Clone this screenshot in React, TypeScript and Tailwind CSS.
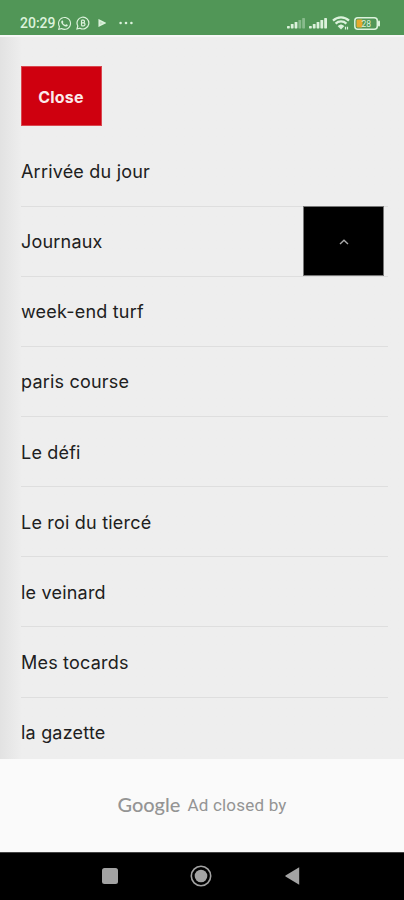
import { FaWhatsapp } from 'react-icons/fa'

type MenuItem = {
  label: string
  expandable?: boolean
}

const items: MenuItem[] = [
  { label: 'Arrivée du jour' },
  { label: 'Journaux', expandable: true },
  { label: 'week-end turf' },
  { label: 'paris course' },
  { label: 'Le défi' },
  { label: 'Le roi du tiercé' },
  { label: 'le veinard' },
  { label: 'Mes tocards' },
  { label: 'la gazette' },
]

const BusinessIcon = () => (
  <svg viewBox="0 0 14 14" className="ml-[4px] size-[14px]" fill="none" stroke="currentColor">
    <path d="M1 13l.8-3A5.9 5.9 0 1 1 4 12.2L1 13Z" strokeWidth="1.2" />
    <path d="M5.5 4.2v5.6M5.5 4.2h1.7a1.3 1.3 0 0 1 0 2.6H5.5M5.5 6.8h2a1.5 1.5 0 0 1 0 3h-2" strokeWidth="1.2" />
  </svg>
)

const Signal = ({ faded }: { faded: number }) => (
  <svg viewBox="0 0 19 12" className="h-3 w-[19px]" fill="currentColor">
    {[0, 1, 2, 3, 4].map((bar) => (
      <rect
        key={bar}
        x={bar * 3.8}
        y={9 - bar * 2}
        width="2.8"
        height={2.4 + bar * 2}
        rx="0.6"
        opacity={bar >= faded ? 0.4 : 1}
      />
    ))}
  </svg>
)

const StatusBar = () => (
  <header className="flex h-[35px] shrink-0 items-start justify-between bg-[#519657] pr-[23px] pl-[20px] text-[#dcf2dc]">
    <div className="flex h-[46px] items-center">
      <span className="w-[37px] font-[Roboto,sans-serif] text-[14px] font-medium">20:29</span>
      <FaWhatsapp className="size-[15px]" />
      <BusinessIcon />
      <svg viewBox="0 0 8 8" className="ml-[8px] size-2" fill="none" stroke="currentColor" strokeWidth="1.5">
        <path d="M1.2 1.2 6.8 4 1.2 6.8Z" fill="currentColor" fillOpacity="0.8" />
      </svg>
      <svg viewBox="0 0 14 4" className="ml-[13px] h-1 w-[14px]" fill="currentColor">
        <circle cx="1.6" cy="2" r="1.3" />
        <circle cx="7" cy="2" r="1.3" />
        <circle cx="12.4" cy="2" r="1.3" />
      </svg>
    </div>
    <div className="flex h-[46px] items-center">
      <Signal faded={3} />
      <span className="w-[3.5px]" />
      <Signal faded={5} />
      <svg viewBox="0 0 18 14" className="ml-[4px] h-[14px] w-[18px]" fill="none" stroke="currentColor">
        <path d="M1 4.6a11.6 11.6 0 0 1 16 0M3.6 7.6a7.8 7.8 0 0 1 10.8 0" strokeWidth="2.2" />
        <path d="M6 10.2a4.3 4.3 0 0 1 6 0L9 13.2Z" fill="currentColor" strokeWidth="0.6" />
        <path d="M13.5 10.8v2.7M15.5 10.8v2.7" strokeWidth="1.2" />
      </svg>
      <svg viewBox="0 0 27 13" className="ml-[4px] h-[13px] w-[27px]" fill="none">
        <rect x="0.8" y="0.8" width="22.5" height="11.4" rx="3" stroke="currentColor" strokeWidth="1.5" />
        <rect x="2.5" y="2.5" width="6" height="8" rx="1" fill="#e7aa2d" />
        <path d="M25 4.5v4" stroke="currentColor" strokeWidth="2" strokeLinecap="round" />
        <text x="7.6" y="9.6" fill="currentColor" fontSize="8.5" fontFamily="Roboto, sans-serif">
          28
        </text>
      </svg>
    </div>
  </header>
)

const MenuRow = ({ label, expandable }: MenuItem) => (
  <li className="flex h-[70.15px] shrink-0 items-stretch justify-between border-b border-[#dedede]">
    <span className="self-center pt-px text-[18px] tracking-[0.2px] text-[#202020]">{label}</span>
    {expandable && (
      <button className="-mt-px mr-[4px] flex w-[81px] items-center justify-center border border-[#777] bg-black text-[#aaa]">
        <svg viewBox="0 0 10 6" className="mt-[2px] h-[6px] w-[10px]" fill="none" stroke="currentColor" strokeWidth="1.4">
          <path d="M1 5 5 1.2 9 5" />
        </svg>
      </button>
    )}
  </li>
)

const NavigationBar = () => (
  <nav className="flex h-12 shrink-0 items-center border-t border-[#444] bg-black pb-[2px] text-[#a3a3a3]">
    <span className="ml-[102px] size-4 rounded-[2.5px] bg-[#a3a3a3]" />
    <svg viewBox="0 0 22 22" className="ml-[72px] size-[22px]" fill="none">
      <circle cx="11" cy="11" r="9.7" stroke="currentColor" strokeWidth="1.6" />
      <circle cx="11" cy="11" r="6.3" fill="currentColor" />
    </svg>
    <svg viewBox="0 0 15 18" className="ml-[73px] h-[18px] w-[15px]" fill="currentColor">
      <path d="M.5 8.6 14.2.3v17.4L.5 9.4q-.5-.4 0-.8Z" />
    </svg>
  </nav>
)

const App = () => {
  return (
    <div className="flex h-[900px] w-[404px] flex-col overflow-hidden bg-[#eee] font-[Inter,sans-serif]">
      <StatusBar />
      <main className="flex min-h-0 flex-1 flex-col overflow-hidden border-t-2 border-[#f7f7f7] bg-linear-to-r from-[#e2e2e2] to-[#eee] to-[22px] pr-[16px] pl-[21px]">
        <button className="mt-[29px] h-[60px] w-[81px] shrink-0 border border-[#d9474f] bg-[#cf000f] pt-px pr-px text-[16px] font-bold tracking-[0.2px] text-[#fbe9ea]">
          Close
        </button>
        <ul className="mt-[10.4px] flex flex-col">
          {items.map((item) => (
            <MenuRow key={item.label} {...item} />
          ))}
        </ul>
      </main>
      <div className="flex h-[93px] shrink-0 items-center justify-center bg-[#fafafa] text-[#949494]">
        <span className="mr-[7px] pb-[3px] font-[Lato,sans-serif] text-[20px] font-medium">Google</span>
        <span className="font-[Roboto,sans-serif] text-[17px] tracking-[0.2px]">Ad closed by</span>
      </div>
      <NavigationBar />
    </div>
  )
}

export default App
